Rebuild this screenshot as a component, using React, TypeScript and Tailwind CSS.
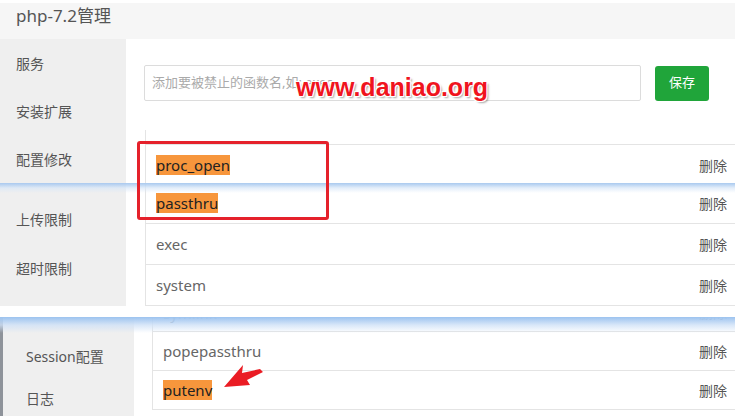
import React from "react";

const font = { fontFamily: '"Noto Sans", "Noto Sans CJK SC", sans-serif' };

function Row({
  text,
  hl,
  h,
  dark,
  del = true,
}: {
  text: string;
  hl?: boolean;
  h: string;
  dark?: boolean;
  del?: boolean;
}) {
  return (
    <div className={`${h} flex items-center justify-between border-b border-[#e4e4e4] pl-[10px] pr-[8px]`}>
      <span
        className={`text-[15px] leading-[20px] ${hl ? "bg-[#f7963c] text-[#222]" : dark ? "text-[#333]" : "text-[#666]"}`}
      >
        {text}
      </span>
      {del && <span className="text-[14px] text-[#555]">删除</span>}
    </div>
  );
}

function SideItem({ text, h }: { text: string; h: string }) {
  return <div className={`${h} flex items-center text-[14px] text-[#555]`}>{text}</div>;
}

export default function App() {
  return (
    <div className="relative w-[735px] h-[416px] overflow-hidden bg-white" style={font}>
      {/* Panel A */}
      <div className="h-[183px] flex flex-col overflow-hidden">
        <div className="h-[39px] shrink-0 bg-[#f6f6f6] border-t-[3px] border-white pl-[16px] pt-[1px] text-[17px] leading-[24px] text-[#555]">
          php-7.2管理
        </div>
        <div className="flex flex-1">
          <div className="w-[126px] shrink-0 bg-[#efefef] pl-[16px] flex flex-col">
            <SideItem text="服务" h="h-[48px]" />
            <SideItem text="安装扩展" h="h-[48px]" />
            <SideItem text="配置修改" h="h-[48px]" />
          </div>
          <div className="flex-1 pl-[18px] pt-[26px]">
            <div className="flex items-center">
              <div className="w-[497px] h-[36px] border border-[#dcdcdc] rounded-[2px] flex items-center pl-[7px] text-[13px] text-[#aaa]">
                添加要被禁止的函数名,如: exec
              </div>
              <div className="ml-[14px] w-[54px] h-[35px] rounded-[3px] bg-[#20a53a] flex items-center justify-center text-[13px] text-white">
                保存
              </div>
            </div>
            <div className="mt-[29px] ml-[1px] border-l border-[#e4e4e4]">
              <div className="h-[15px] border-b border-[#e4e4e4]" />
              <Row text="proc_open" hl h="h-[41px]" />
            </div>
          </div>
        </div>
      </div>

      {/* Panel B */}
      <div className="relative h-[134px] flex flex-col">
        <div className="flex h-[123px]">
          <div className="w-[126px] shrink-0 bg-[#efefef] pl-[16px] pt-[12px] flex flex-col">
            <SideItem text="上传限制" h="h-[49px]" />
            <SideItem text="超时限制" h="h-[49px]" />
          </div>
          <div className="flex-1 pl-[19px]">
            <div className="border-l border-[#e4e4e4]">
              <Row text="passthru" hl h="h-[41px]" />
              <Row text="exec" h="h-[41px]" />
              <Row text="system" h="h-[41px]" />
            </div>
          </div>
        </div>
        <div className="absolute left-0 right-0 top-0 h-[10px] bg-gradient-to-b from-[#a9c9ef] via-[#d8e7f8]/70 to-transparent" />
      </div>

      {/* Panel C */}
      <div className="relative h-[99px] flex">
        <div className="w-[3px] shrink-0 bg-[#8e939a]" />
        <div className="w-[131px] shrink-0 bg-[#efefef] pl-[23px] pt-[22px] flex flex-col">
          <SideItem text="Session配置" h="h-[40px]" />
          <div className="h-[10px]" />
          <SideItem text="日志" h="h-[40px]" />
        </div>
        <div className="flex-1 pl-[18px]">
          <div className="border-l border-[#e4e4e4]">
            <div className="h-[15px] border-b border-[#e4e4e4] overflow-hidden flex justify-between pl-[10px] pr-[8px]">
              <span className="text-[15px] leading-[20px] -mt-[14px] text-[#666]">symlink</span>
              <span className="text-[14px] leading-[20px] -mt-[14px] text-[#555]">删除</span>
            </div>
            <Row text="popepassthru" h="h-[39px]" />
            <Row text="putenv" hl h="h-[39px]" />
          </div>
        </div>
        <div className="absolute left-0 right-0 top-0 h-[16px] bg-gradient-to-b from-[#9cc3ef] via-[#cfe1f7]/80 to-transparent" />
      </div>

      {/* Red box */}
      <div className="absolute left-[137px] top-[141px] w-[192px] h-[79px] border-[3px] border-[#e5212b] rounded-[3px]" />

      {/* Watermark */}
      <div
        className="absolute left-[296px] top-[71px] text-[25px] font-bold text-[#f0141e] leading-[32px]"
        style={{
          fontFamily: '"Liberation Sans", Arial, sans-serif',
          textShadow:
            "1px 1px 0 #fff, -1px -1px 0 #fff, 1px -1px 0 #fff, -1px 1px 0 #fff, 2px 2px 2px rgba(0,0,0,0.35)",
        }}
      >
        www.daniao.org
      </div>

      {/* Arrow */}
      <svg className="absolute left-0 top-0" width="735" height="416" viewBox="0 0 735 416">
        <polygon
          points="224,387 243,365 242,373 260,369 263,372 247,380 250,385"
          fill="#ea1c24"
        />
      </svg>
    </div>
  );
}
